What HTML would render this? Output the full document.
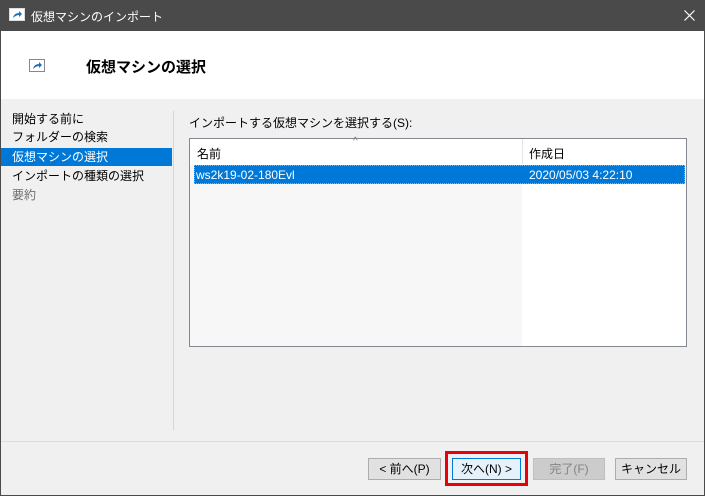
<!DOCTYPE html>
<html><head><meta charset="utf-8"><style>
*{margin:0;padding:0;box-sizing:border-box}
body{width:705px;height:496px;overflow:hidden;background:#f0f0f0;font-family:"Liberation Sans","Noto Sans CJK JP",sans-serif;font-size:12px;color:#000;position:relative}
.a{position:absolute}
.title{left:0;top:0;width:705px;height:31px;background:#4a4a4a;color:#fff}
.hdr{left:1px;top:31px;width:703px;height:68px;background:#fff}
.nav div{position:absolute;left:1px;width:171px;height:18px;padding-left:11px;line-height:18px}
.btn{position:absolute;top:458px;height:22px;border:1px solid #adadad;background:#e1e1e1;text-align:center;line-height:20px}
</style></head><body>
<div class="a" style="left:0;top:0;width:1px;height:496px;background:#4a4a4a"></div>
<div class="a" style="right:0;top:0;width:1px;height:496px;background:#4a4a4a"></div>
<div class="a" style="left:0;bottom:0;width:705px;height:1px;background:#4a4a4a"></div>
<div class="a title">
 <svg class="a" style="left:9px;top:8px" width="16" height="13"><rect x="0.5" y="0.5" width="15" height="12" fill="#fff" stroke="#ddd"/><path d="M4 10 Q5 5 10 5 L10 3 L13 6 L10 9 L10 7 Q7 7 4 10Z" fill="#1f6fb8"/></svg>
 <div class="a" style="left:31px;top:8px;font-size:12px">仮想マシンのインポート</div>
 <svg class="a" style="left:684px;top:10px" width="11" height="11"><path d="M0.5 0.5L10.5 10.5M10.5 0.5L0.5 10.5" stroke="#fff" stroke-width="1.2"/></svg>
</div>
<div class="a hdr">
 <svg class="a" style="left:28px;top:28px" width="16" height="13"><rect x="0.5" y="0.5" width="15" height="12" fill="#fff" stroke="#888"/><path d="M4 10 Q5 5 10 5 L10 3 L13 6 L10 9 L10 7 Q7 7 4 10Z" fill="#1f6fb8"/></svg>
 <div class="a" style="left:85px;top:25px;font-size:15px;font-weight:bold">仮想マシンの選択</div>
</div>
<div class="nav">
 <div style="top:110px">開始する前に</div>
 <div style="top:128px">フォルダーの検索</div>
 <div style="top:148px;background:#0078d7;color:#fff">仮想マシンの選択</div>
 <div style="top:167px">インポートの種類の選択</div>
 <div style="top:186px;color:#6d6d6d">要約</div>
</div>
<div class="a" style="left:173px;top:111px;width:1px;height:319px;background:#d5d5d5"></div>
<div class="a" style="left:189px;top:114px">インポートする仮想マシンを選択する(S):</div>
<div class="a" style="left:189px;top:138px;width:498px;height:209px;border:1px solid #828790;background:#fff">
 <div class="a" style="left:0;top:26px;width:332px;height:181px;background:#f7f7f7"></div>
 <div class="a" style="left:332px;top:0;width:1px;height:25px;background:#e5e5e5"></div>
 <div class="a" style="left:163px;top:-3px;font-size:10px;color:#777">^</div>
 <div class="a" style="left:7px;top:6px">名前</div>
 <div class="a" style="left:339px;top:6px">作成日</div>
 <div class="a" style="left:4px;top:26px;width:491px;height:19px;background:#0078d7;color:#fff;border:1px dotted #e0a060">
  <span class="a" style="left:1px;top:2px">ws2k19-02-180Evl</span>
  <span class="a" style="left:334px;top:2px">2020/05/03 4:22:10</span>
 </div>
</div>
<div class="a" style="left:1px;top:441px;width:703px;height:1px;background:#dcdcdc"></div>
<div class="btn" style="left:368px;width:73px">&lt; 前へ(P)</div>
<div class="a" style="left:445px;top:451px;width:83px;height:35px;border:3px solid #e8000b"></div>
<div class="btn" style="left:452px;width:69px;border-color:#0078d7;background:#e5f1fb">次へ(N) &gt;</div>
<div class="btn" style="left:533px;width:72px;background:#cccccc;border-color:#bfbfbf;color:#838383">完了(F)</div>
<div class="btn" style="left:615px;width:72px">キャンセル</div>
</body></html>
